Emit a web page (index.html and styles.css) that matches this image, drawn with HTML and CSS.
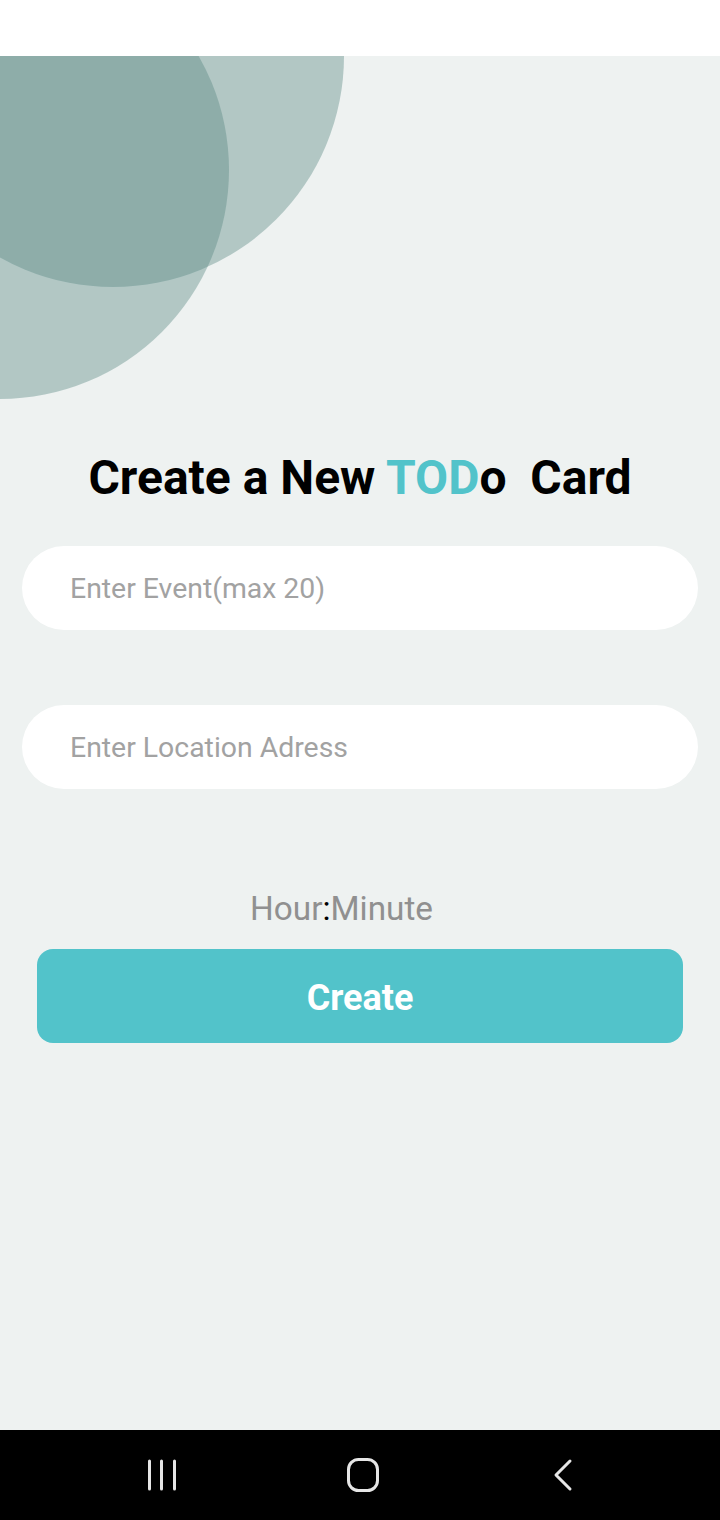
FILE: index.html
```html
<!DOCTYPE html>
<html lang="en">
<head>
<meta charset="utf-8">
<title>Create a New TODo Card</title>
<link rel="stylesheet" href="styles.css">
</head>
<body>
<div class="phone">
  <div class="status-bar"></div>
  <main class="screen">
    <svg class="decor" width="360" height="360" viewBox="0 0 360 360" aria-hidden="true">
      <circle cx="113" cy="0" r="231" fill="#588783" fill-opacity="0.4"/>
      <circle cx="0" cy="114" r="229" fill="#588783" fill-opacity="0.4"/>
    </svg>
    <div class="content">
      <h1 class="title">Create a New <span class="accent">TOD</span>o&nbsp; Card</h1>
      <form class="form">
        <input class="field" type="text" placeholder="Enter Event(max 20)">
        <input class="field" type="text" placeholder="Enter Location Adress">
        <p class="time">Hour<span class="colon">:</span>Minute</p>
        <button class="create" type="button">Create</button>
      </form>
    </div>
  </main>
  <nav class="nav-bar">
    <svg class="nav-icon" width="40" height="40" viewBox="0 0 40 40" aria-hidden="true">
      <g stroke="#e6e6e6" stroke-width="3" stroke-linecap="round" fill="none">
        <line x1="7.5" y1="6" x2="7.5" y2="34"/>
        <line x1="19.5" y1="6" x2="19.5" y2="34"/>
        <line x1="32.5" y1="6" x2="32.5" y2="34"/>
      </g>
    </svg>
    <svg class="nav-icon" width="40" height="40" viewBox="0 0 40 40" aria-hidden="true">
      <rect x="5.5" y="4.5" width="29" height="31" rx="10" ry="10" stroke="#e6e6e6" stroke-width="3" fill="none"/>
    </svg>
    <svg class="nav-icon" width="40" height="40" viewBox="0 0 40 40" aria-hidden="true">
      <polyline points="26,6 12,20 26,34" stroke="#e6e6e6" stroke-width="3" stroke-linecap="round" stroke-linejoin="round" fill="none"/>
    </svg>
  </nav>
</div>
</body>
</html>
```

FILE: styles.css
```css
* {
  box-sizing: border-box;
}

html, body {
  margin: 0;
  padding: 0;
}

body {
  width: 720px;
  height: 1520px;
  font-family: Roboto, "Noto Sans", "Liberation Sans", sans-serif;
  background: #000;
}

.phone {
  display: flex;
  flex-direction: column;
  width: 720px;
  height: 1520px;
}

.status-bar {
  height: 56px;
  background: #ffffff;
  flex: none;
}

.screen {
  position: relative;
  flex: 1;
  background: #eef2f1;
  overflow: hidden;
}

.decor {
  position: absolute;
  top: 0;
  left: 0;
}

.content {
  position: relative;
  display: flex;
  flex-direction: column;
  padding-top: 394px;
}

.title {
  margin: 0;
  text-align: center;
  font-size: 48px;
  line-height: 56px;
  font-weight: 700;
  color: #000;
  letter-spacing: 0;
}

.accent {
  color: #52c3ca;
}

.form {
  display: flex;
  flex-direction: column;
  margin: 40px 0 0;
}

.field {
  height: 84px;
  margin: 0 22px 75px;
  border: none;
  border-radius: 42px;
  background: #ffffff;
  padding: 0 0 0 48px;
  font-family: Roboto, "Noto Sans", "Liberation Sans", sans-serif;
  font-size: 28.4px;
  color: #333;
  outline: none;
}

.field::placeholder {
  color: #a2a2a2;
}

.time {
  margin: 25px 0 0;
  padding-right: 37px;
  text-align: center;
  font-size: 33.3px;
  line-height: 40px;
  color: #909090;
}

.colon {
  color: #000;
}

.create {
  height: 94px;
  margin: 20px 37px 0;
  border: none;
  border-radius: 16px;
  background: #52c3ca;
  color: #fff;
  font-family: Roboto, "Noto Sans", "Liberation Sans", sans-serif;
  font-size: 36px;
  font-weight: 700;
  padding: 4px 0 0;
}

.nav-bar {
  height: 90px;
  flex: none;
  background: #000;
  display: flex;
  align-items: center;
  gap: 161px;
  padding: 0 0 0 142px;
}

.nav-icon {
  display: block;
}
```
